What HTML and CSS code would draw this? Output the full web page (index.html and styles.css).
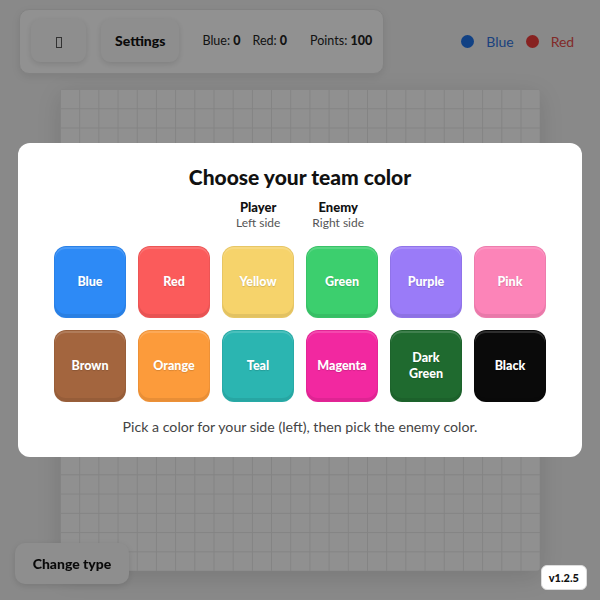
FILE: index.html
```html
<!DOCTYPE html>
<html lang="en">
<head>
    <meta charset="UTF-8">
    <meta name="viewport" content="width=device-width, initial-scale=1.0">
    <title>Territory</title>
    <link rel="stylesheet" href="styles.css">
</head>
<body>
    <header class="top">
        <div class="panel">
            <button class="btn icon-btn"><span class="tofu"></span></button>
            <button class="btn">Settings</button>
            <div class="stats">
                <span>Blue: <b>0</b></span>
                <span>Red: <b>0</b></span>
                <span class="points">Points: <b>100</b></span>
            </div>
        </div>
        <div class="legend">
            <span class="dot blue"></span><span class="legend-blue">Blue</span>
            <span class="dot red"></span><span class="legend-red">Red</span>
        </div>
    </header>

    <main class="board"></main>

    <button class="btn change-type">Change type</button>

    <div class="overlay">
        <div class="modal">
            <h2>Choose your team color</h2>
            <div class="sides">
                <div class="side"><strong>Player</strong><span>Left side</span></div>
                <div class="side"><strong>Enemy</strong><span>Right side</span></div>
            </div>
            <div class="swatches">
                <button class="swatch" style="background:#2d8af6">Blue</button>
                <button class="swatch" style="background:#fb5b5b">Red</button>
                <button class="swatch" style="background:#f6d36b">Yellow</button>
                <button class="swatch" style="background:#3ccf6e">Green</button>
                <button class="swatch" style="background:#9a7bf8">Purple</button>
                <button class="swatch" style="background:#fc84b8">Pink</button>
                <button class="swatch" style="background:#a3653e">Brown</button>
                <button class="swatch" style="background:#fc9b3b">Orange</button>
                <button class="swatch" style="background:#2bb5b1">Teal</button>
                <button class="swatch" style="background:#f228a0">Magenta</button>
                <button class="swatch" style="background:#1f6a2f">Dark<br>Green</button>
                <button class="swatch" style="background:#0a0a0a">Black</button>
            </div>
            <p class="hint">Pick a color for your side (left), then pick the enemy color.</p>
        </div>
    </div>

    <div class="version">v1.2.5</div>
</body>
</html>
```

FILE: styles.css
```css
body{
    margin: 0;
    width: 600px;
    height: 600px;
    overflow: hidden;
    background-color: #e9e9e9;
    font-family: "Lato", "Noto Sans", sans-serif;
    color: #111;
}

.top{
    display: flex;
    align-items: center;
    padding: 9px 0 0 19px;
}

.panel{
    display: flex;
    align-items: center;
    height: 61px;
    padding: 0 11px 2px 11px;
    background-color: #f7f7f7;
    border: 1px solid #dedede;
    border-radius: 10px;
    box-shadow: 0 3px 8px rgba(0,0,0,0.08);
}

.btn{
    height: 43px;
    padding: 0 14px;
    border: none;
    border-radius: 9px;
    background-color: #f1f1f1;
    box-shadow: 0 2px 6px rgba(0,0,0,0.12);
    font-family: inherit;
    font-weight: 900;
    font-size: 14px;
    color: #111;
}

.icon-btn{
    width: 55px;
    margin-right: 15px;
}

.tofu{
    display: inline-block;
    width: 4px;
    height: 9px;
    border: 1px solid #555;
    vertical-align: middle;
}

.stats{
    display: flex;
    margin-left: 23px;
    font-size: 12.5px;
    color: #222;
}

.stats span{
    margin-right: 12px;
}

.stats .points{
    margin-left: 11px;
    margin-right: 0;
}

.stats b{
    font-weight: 900;
}

.legend{
    display: flex;
    align-items: center;
    margin-left: 77px;
    font-size: 14px;
}

.dot{
    width: 13px;
    height: 13px;
    border-radius: 50%;
    margin-right: 12px;
}

.dot.blue{ background-color: #1d6fe0; }
.dot.red{ background-color: #e63a38; margin-left: 12px; }
.legend-blue{ color: #2f6fd6; }
.legend-red{ color: #dc4a47; }

.board{
    width: 480px;
    height: 482px;
    margin: 15px auto 0;
    background-color: #f5f5f5;
    background-image:
        linear-gradient(to right, #e0e0e0 1px, transparent 1px),
        linear-gradient(to bottom, #e0e0e0 1px, transparent 1px);
    background-size: 19.2px 19.28px;
    border-radius: 4px;
    box-shadow: 0 6px 24px rgba(0,0,0,0.12);
}

.change-type{
    position: fixed;
    left: 15px;
    top: 543px;
    width: 114px;
    height: 41px;
    border-radius: 10px;
}

.overlay{
    position: fixed;
    inset: 0;
    display: flex;
    align-items: center;
    justify-content: center;
    background-color: rgba(0,0,0,0.41);
}

.modal{
    width: 564px;
    box-sizing: border-box;
    margin-top: -1px;
    padding: 20px 36px 21px;
    background-color: #fff;
    border-radius: 12px;
    text-align: center;
}

.modal h2{
    margin: 0;
    font-size: 21px;
    line-height: 28px;
    font-weight: 900;
}

.sides{
    display: flex;
    justify-content: center;
    gap: 32px;
    margin-top: 8px;
}

.side{
    display: flex;
    flex-direction: column;
    font-size: 12px;
    color: #555;
}

.side strong{
    font-size: 13px;
    line-height: 16px;
    font-weight: 900;
    color: #111;
}

.side span{
    line-height: 15px;
}

.swatches{
    display: grid;
    grid-template-columns: repeat(6, 72px);
    grid-auto-rows: 72px;
    gap: 12px;
    margin-top: 16px;
}

.swatch{
    border: 1px solid rgba(0,0,0,0.06);
    border-radius: 12px;
    box-shadow: inset 0 -3px 0 rgba(0,0,0,0.08), inset 0 2px 0 rgba(255,255,255,0.15);
    font-family: inherit;
    font-weight: 900;
    font-size: 12.5px;
    line-height: 16px;
    color: #fff;
    text-shadow: 0 1px 1px rgba(0,0,0,0.15);
}

.hint{
    margin: 16px 0 0;
    font-size: 14.2px;
    line-height: 18px;
    color: #444;
}

.version{
    position: fixed;
    right: 13px;
    bottom: 10px;
    z-index: 2;
    padding: 5px 7px;
    background-color: #fff;
    border: 1px solid #ddd;
    border-radius: 6px;
    font-size: 11px;
    font-weight: 900;
}
```
